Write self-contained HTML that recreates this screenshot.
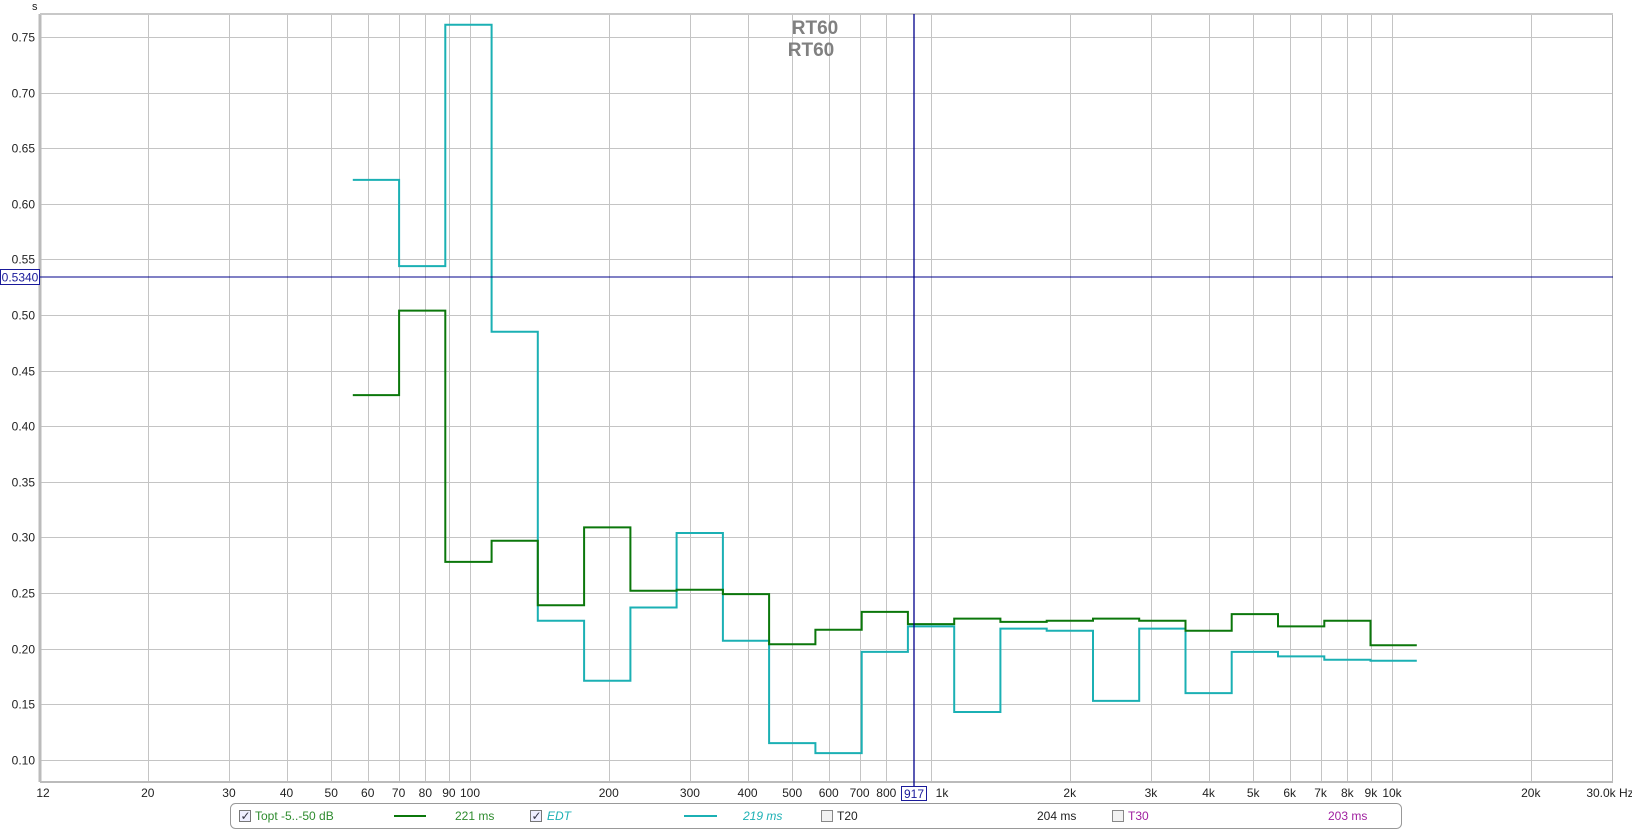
<!DOCTYPE html>
<html><head><meta charset="utf-8"><style>
html,body{margin:0;padding:0;background:#fff;width:1632px;height:830px;overflow:hidden;font-family:"Liberation Sans",sans-serif}
</style></head><body>
<svg id="s" width="1632" height="830" xmlns="http://www.w3.org/2000/svg" font-family="Liberation Sans, sans-serif" font-size="12">
<rect x="0" y="0" width="1632" height="830" fill="#fff"/>
<g id="grid" stroke="#c4c4c4" stroke-width="1"></g>
<rect x="40.5" y="14.5" width="1572" height="767" fill="none" stroke="#b8b8b8" stroke-width="1"/>
<line x1="40" y1="14" x2="40" y2="782" stroke="#bbb" stroke-width="3"/>
<line x1="40" y1="782" x2="1613" y2="782" stroke="#bbb" stroke-width="2"/>
<line x1="40" y1="14" x2="1613" y2="14" stroke="#c8c8c8" stroke-width="2"/>
<text x="815" y="34" text-anchor="middle" font-size="19" font-weight="bold" fill="#808080">RT60</text>
<text x="811" y="56" text-anchor="middle" font-size="19" font-weight="bold" fill="#808080">RT60</text>
<text x="32" y="10" font-size="11" fill="#222">s</text>
<g id="ylab" fill="#222" text-anchor="end"></g>
<g id="xlab" fill="#222" text-anchor="middle"></g>
<polyline id="cy" fill="none" stroke="#1bb0b4" stroke-width="2"/>
<polyline id="gr" fill="none" stroke="#0b770b" stroke-width="2"/>
<line x1="40" y1="277" x2="1613" y2="277" stroke="#00008b" stroke-width="1"/>
<line x1="914" y1="14" x2="914" y2="786" stroke="#00008b" stroke-width="1.3"/>
<rect x="0.5" y="269.5" width="39" height="15" fill="#fff" stroke="#1a1a9a"/>
<text x="20" y="281.5" text-anchor="middle" fill="#1a1a9a" font-size="12">0.5340</text>
<rect x="901.5" y="786.5" width="25" height="14" fill="#fff" stroke="#1a1a9a"/>
<text x="914" y="798" text-anchor="middle" fill="#1a1a9a" font-size="12">917</text>
<rect x="230.5" y="803.5" width="1171" height="25" rx="5" fill="#fff" stroke="#999"/>
<rect x="239.5" y="810.5" width="11" height="11" fill="#eef" stroke="#777"/>
<text x="240.5" y="820" font-size="12" fill="#334">✓</text>
<text x="255" y="820" fill="#2e8b2e">Topt -5..-50 dB</text>
<line x1="394" y1="816" x2="426" y2="816" stroke="#0b770b" stroke-width="2"/>
<text x="455" y="820" fill="#2e8b2e">221 ms</text>
<rect x="530.5" y="810.5" width="11" height="11" fill="#eef" stroke="#777"/>
<text x="531.5" y="820" font-size="12" fill="#334">✓</text>
<text x="547" y="820" fill="#1bb0b4" font-style="italic">EDT</text>
<line x1="684" y1="816" x2="717" y2="816" stroke="#1bb0b4" stroke-width="2"/>
<text x="743" y="820" fill="#1bb0b4" font-style="italic">219 ms</text>
<rect x="821.5" y="810.5" width="11" height="11" fill="#f2f2f2" stroke="#888"/>
<text x="837" y="820" fill="#222">T20</text>
<text x="1037" y="820" fill="#222">204 ms</text>
<rect x="1112.5" y="810.5" width="11" height="11" fill="#f2f2f2" stroke="#888"/>
<text x="1128" y="820" fill="#a020a0">T30</text>
<text x="1328" y="820" fill="#a020a0">203 ms</text>
</svg>
<script>
var NS="http://www.w3.org/2000/svg";
function X(f){return 470+461*Math.log10(f/100);}
function Y(v){return 37+(0.75-v)*1112;}
var g=document.getElementById('grid');
function ln(x1,y1,x2,y2){var l=document.createElementNS(NS,'line');l.setAttribute('x1',x1);l.setAttribute('y1',y1);l.setAttribute('x2',x2);l.setAttribute('y2',y2);g.appendChild(l);}
var yl=document.getElementById('ylab');
for(var i=2;i<=15;i++){var v=i*0.05;var y=Math.round(Y(v))+0.5;ln(40,y,1613,y);
 var t=document.createElementNS(NS,'text');t.setAttribute('x',35);t.setAttribute('y',y+4);t.textContent=v.toFixed(2);yl.appendChild(t);}
var fs=[20,30,40,50,60,70,80,90,100,200,300,400,500,600,700,800,1000,2000,3000,4000,5000,6000,7000,8000,9000,10000,20000];
var xl=document.getElementById('xlab');
fs.forEach(function(f){var x=Math.round(X(f))+0.5;ln(x,14,x,782);});
var labs=[[12,"12",43],[20,"20"],[30,"30"],[40,"40"],[50,"50"],[60,"60"],[70,"70"],[80,"80"],[90,"90"],[100,"100"],[200,"200"],[300,"300"],[400,"400"],[500,"500"],[600,"600"],[700,"700"],[800,"800"],[1000,"1k",942],[2000,"2k"],[3000,"3k"],[4000,"4k"],[5000,"5k"],[6000,"6k"],[7000,"7k"],[8000,"8k"],[9000,"9k"],[10000,"10k"],[20000,"20k"],[30000,"30.0k Hz",1610]];
labs.forEach(function(a){var t=document.createElementNS(NS,'text');t.setAttribute('x',a[2]||X(a[0]));t.setAttribute('y',797);t.textContent=a[1];xl.appendChild(t);});
var cy=[0.6215,0.544,0.761,0.485,0.225,0.171,0.237,0.304,0.207,0.115,0.106,0.197,0.220,0.143,0.218,0.216,0.153,0.218,0.160,0.197,0.193,0.190,0.189];
var gr=[0.428,0.504,0.278,0.297,0.239,0.309,0.252,0.253,0.249,0.204,0.217,0.233,0.222,0.227,0.224,0.225,0.227,0.225,0.216,0.231,0.220,0.225,0.203];
function pts(a){var p=[];for(var k=0;k<a.length;k++){var x0=352.8+46.26*k,x1=x0+46.26,y=Y(a[k]).toFixed(1);p.push(x0.toFixed(1)+','+y);p.push(x1.toFixed(1)+','+y);}return p.join(' ');}
document.getElementById('cy').setAttribute('points',pts(cy));
document.getElementById('gr').setAttribute('points',pts(gr));
</script>
</body></html>
